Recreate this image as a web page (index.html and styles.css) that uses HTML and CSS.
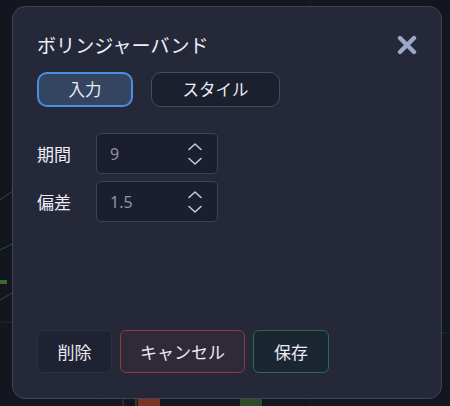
FILE: index.html
```html
<!DOCTYPE html>
<html lang="ja">
<head>
<meta charset="utf-8">
<title>ボリンジャーバンド</title>
<link rel="stylesheet" href="styles.css">
</head>
<body>
<div class="chart">
  <svg width="450" height="406" viewBox="0 0 450 406">
    <line x1="310" y1="0" x2="310" y2="406" stroke="#1c1f2a" stroke-width="1"/>
    <line x1="98" y1="0" x2="98" y2="406" stroke="#1a1d27" stroke-width="1"/>
    <line x1="0" y1="322" x2="450" y2="333" stroke="#1f2a3a" stroke-width="1"/>
    <polyline points="0,200 14,190" fill="none" stroke="#3b4a2a" stroke-width="1"/>
    <polyline points="0,250 14,243" fill="none" stroke="#2d4a4a" stroke-width="1"/>
    <polyline points="0,300 14,292" fill="none" stroke="#4a4026" stroke-width="1"/>
    <rect x="0" y="280" width="7" height="4" fill="#3b6a2a"/>
    <line x1="123" y1="398" x2="123" y2="406" stroke="#6a2a2a"/>
    <line x1="136" y1="398" x2="136" y2="406" stroke="#6a5a2a"/>
    <rect x="138" y="398" width="22" height="8" fill="#7a3424"/>
    <rect x="240" y="398" width="22" height="8" fill="#2f4a26"/>
  </svg>
</div>

<div class="dialog">
  <div class="header">
    <h1 class="title">ボリンジャーバンド</h1>
    <button class="close" aria-label="閉じる">
      <svg width="20" height="20" viewBox="0 0 20 20">
        <path d="M3 3 L17 17 M17 3 L3 17" stroke="#9aa9c6" stroke-width="4.4" stroke-linecap="round"/>
      </svg>
    </button>
  </div>

  <div class="tabs">
    <button class="tab tab-active">入力</button>
    <button class="tab tab-style">スタイル</button>
  </div>

  <div class="fields">
    <label class="label">期間</label>
    <div class="input">
      <span class="value">9</span>
      <span class="spin">
        <svg width="16" height="24" viewBox="0 0 16 24">
          <path d="M2 7.5 L8 2 L14 7.5" fill="none" stroke="#c3c9d6" stroke-width="1.6" stroke-linecap="round" stroke-linejoin="round"/>
          <path d="M2 16.5 L8 22 L14 16.5" fill="none" stroke="#c3c9d6" stroke-width="1.6" stroke-linecap="round" stroke-linejoin="round"/>
        </svg>
      </span>
    </div>
    <label class="label">偏差</label>
    <div class="input">
      <span class="value">1.5</span>
      <span class="spin">
        <svg width="16" height="24" viewBox="0 0 16 24">
          <path d="M2 7.5 L8 2 L14 7.5" fill="none" stroke="#c3c9d6" stroke-width="1.6" stroke-linecap="round" stroke-linejoin="round"/>
          <path d="M2 16.5 L8 22 L14 16.5" fill="none" stroke="#c3c9d6" stroke-width="1.6" stroke-linecap="round" stroke-linejoin="round"/>
        </svg>
      </span>
    </div>
  </div>

  <div class="footer">
    <button class="btn btn-delete">削除</button>
    <button class="btn btn-cancel">キャンセル</button>
    <button class="btn btn-save">保存</button>
  </div>
</div>
</body>
</html>
```

FILE: styles.css
```css
* { box-sizing: border-box; }

html, body {
  margin: 0;
  padding: 0;
}

body {
  width: 450px;
  height: 406px;
  background: #14161f;
  position: relative;
  overflow: hidden;
  font-family: "Noto Sans CJK JP", "Noto Sans", sans-serif;
}

.chart {
  position: absolute;
  left: 0;
  top: 0;
  width: 450px;
  height: 406px;
}

.chart svg { display: block; }

.dialog {
  position: absolute;
  left: 12px;
  top: 6px;
  width: 430px;
  height: 393px;
  background: #252839;
  border: 1.5px solid #40445a;
  border-radius: 13px;
  padding: 26px 24px 25px 24px;
  display: flex;
  flex-direction: column;
}

.header {
  display: flex;
  align-items: center;
  justify-content: space-between;
  height: 24px;
}

.title {
  margin: 0;
  font-size: 19px;
  font-weight: 400;
  line-height: 24px;
  color: #eef0f5;
  letter-spacing: 0.1px;
}

.close {
  background: none;
  border: 0;
  padding: 0;
  width: 20px;
  height: 20px;
  display: flex;
}

.tabs {
  display: flex;
  gap: 18px;
  margin-top: 15px;
}

.tab {
  height: 35px;
  border-radius: 10px;
  font-family: inherit;
  font-size: 16.5px;
  color: #e8ecf4;
  padding: 0;
  line-height: 1;
}

.tab-active {
  width: 96px;
  background: #344562;
  border: 2px solid #4a8fe0;
}

.tab-style {
  width: 129px;
  background: #1c1f2d;
  border: 1.5px solid #474b5c;
}

.fields {
  display: grid;
  grid-template-columns: 59px 122px;
  row-gap: 7px;
  align-items: center;
  margin-top: 26px;
}

.label {
  font-size: 17px;
  color: #eceef3;
}

.input {
  height: 41px;
  background: #1a1e2f;
  border: 1.5px solid #3b4258;
  border-radius: 5px;
  display: flex;
  align-items: center;
  justify-content: space-between;
  padding: 0 14px 0 13px;
}

.value {
  font-family: "Noto Sans", "Open Sans", sans-serif;
  font-size: 16px;
  color: #8d95aa;
}

.spin {
  display: flex;
}

.footer {
  margin-top: auto;
  display: flex;
  gap: 8px;
}

.btn {
  height: 43px;
  border-radius: 6px;
  font-family: inherit;
  font-size: 17px;
  color: #eaeaf0;
  padding: 0;
}

.btn-delete {
  width: 75px;
  background: #1f2233;
  border: 1.5px solid #2c3042;
}

.btn-cancel {
  width: 125px;
  background: #2f2938;
  border: 1.5px solid #8e3b41;
}

.btn-save {
  width: 76px;
  background: #1b2633;
  border: 1.5px solid #2c6a4d;
}
```
